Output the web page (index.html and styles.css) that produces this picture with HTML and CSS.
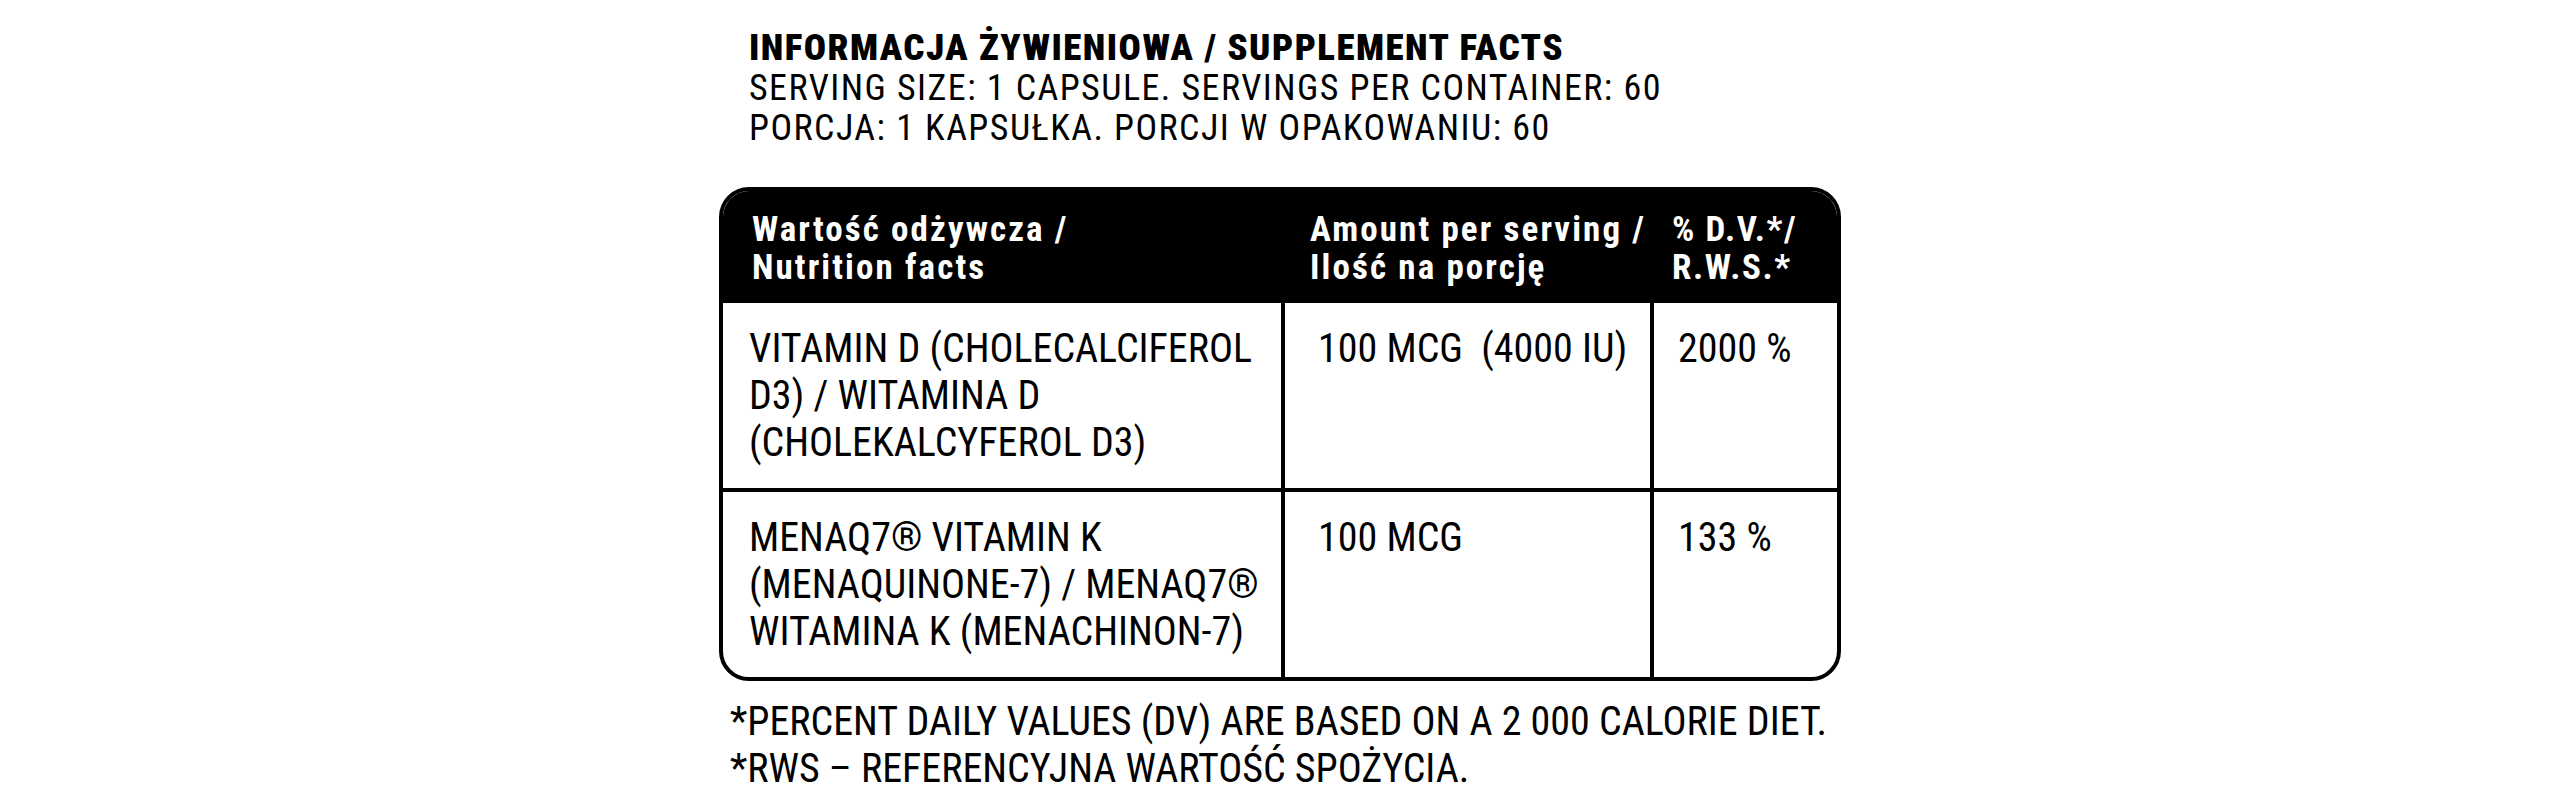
FILE: index.html
```html
<!DOCTYPE html>
<html lang="pl">
<head>
<meta charset="utf-8">
<title>Supplement facts</title>
<link rel="stylesheet" href="styles.css">
</head>
<body>
<main class="label">
  <header class="intro">
    <h1 class="intro-title">INFORMACJA ŻYWIENIOWA / SUPPLEMENT FACTS</h1>
    <p class="intro-line">SERVING SIZE: 1 CAPSULE. SERVINGS PER CONTAINER: 60</p>
    <p class="intro-line">PORCJA: 1 KAPSUŁKA. PORCJI W OPAKOWANIU: 60</p>
  </header>

  <section class="facts">
    <div class="head head-name">Wartość odżywcza /<br>Nutrition facts</div>
    <div class="head head-amount">Amount per serving /<br>Ilość na porcję</div>
    <div class="head head-dv">% D.V.*/<br>R.W.S.*</div>

    <div class="cell cell-name">VITAMIN D (CHOLECALCIFEROL<br>D3) / WITAMINA D<br>(CHOLEKALCYFEROL D3)</div>
    <div class="cell cell-amount">100 MCG&nbsp;&nbsp;(4000 IU)</div>
    <div class="cell cell-dv">2000 %</div>

    <div class="cell cell-name row-next">MENAQ7® VITAMIN K<br>(MENAQUINONE-7) / MENAQ7®<br>WITAMINA K (MENACHINON-7)</div>
    <div class="cell cell-amount row-next">100 MCG</div>
    <div class="cell cell-dv row-next">133 %</div>
  </section>

  <footer class="notes">
    <p class="note">*PERCENT DAILY VALUES (DV) ARE BASED ON A 2 000 CALORIE DIET.</p>
    <p class="note">*RWS – REFERENCYJNA WARTOŚĆ SPOŻYCIA.</p>
  </footer>
</main>
</body>
</html>
```

FILE: styles.css
```css
* {
  box-sizing: border-box;
}

html,
body {
  margin: 0;
  padding: 0;
  background: #ffffff;
}

body {
  font-family: "Roboto Condensed", "Roboto", "Liberation Sans", sans-serif;
  font-stretch: condensed;
  color: #000000;
}

.label {
  width: 1122px;
  margin: 0 auto;
  padding-top: 28px;
}

.intro {
  padding-left: 30px;
  line-height: 40px;
}

.intro-title {
  margin: 0;
  font-size: 37px;
  font-weight: 900;
  line-height: 40px;
  letter-spacing: 1.45px;
}

.intro-line {
  margin: 0;
  font-size: 36px;
  font-weight: 400;
  letter-spacing: 1.45px;
}

.facts {
  margin-top: 39px;
  display: grid;
  grid-template-columns: 558px 369px 187px;
  border: 4px solid #000000;
  border-radius: 30px;
  overflow: hidden;
}

.head {
  background: #000000;
  color: #ffffff;
  font-size: 35px;
  font-weight: 700;
  line-height: 38px;
  letter-spacing: 2.1px;
  padding-top: 20px;
  padding-bottom: 16px;
}

.head-name {
  padding-left: 29px;
}

.head-amount {
  padding-left: 29px;
}

.head-dv {
  padding-left: 22px;
  letter-spacing: 1.6px;
}

.cell {
  font-size: 40px;
  line-height: 47px;
  padding-top: 22px;
  padding-bottom: 22px;
  min-height: 185px;
}

.cell-name {
  padding-left: 26px;
}

.cell-amount {
  border-left: 4px solid #000000;
  padding-left: 33px;
}

.cell-dv {
  border-left: 4px solid #000000;
  padding-left: 24px;
}

.row-next {
  border-top: 4px solid #000000;
  min-height: 189px;
}

.notes {
  padding-top: 17px;
  padding-left: 11px;
}

.note {
  margin: 0;
  font-size: 40px;
  line-height: 47px;
}
```
